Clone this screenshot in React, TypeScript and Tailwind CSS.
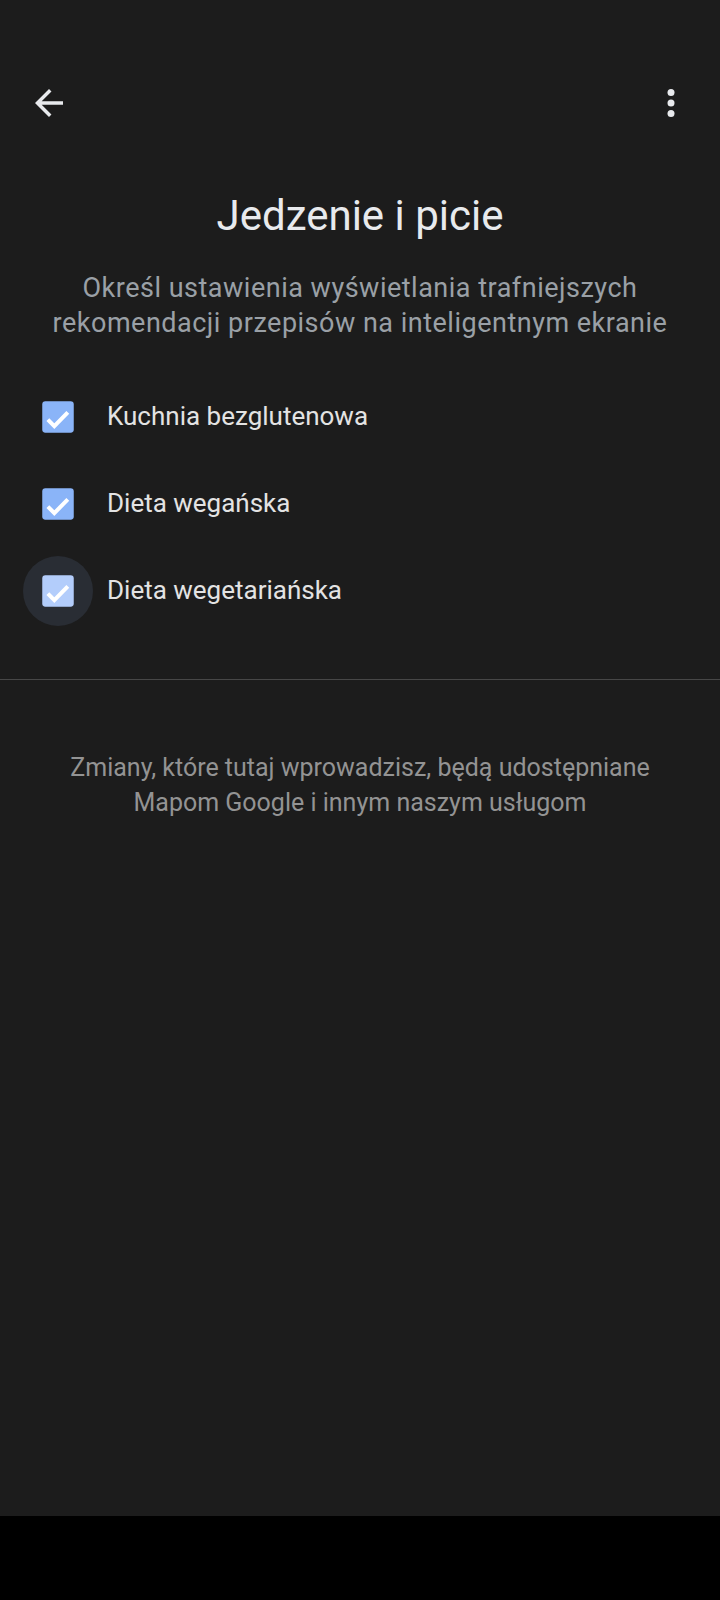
import React from "react";

const OPTIONS = [
  { label: "Kuchnia bezglutenowa", focused: false },
  { label: "Dieta wegańska", focused: false },
  { label: "Dieta wegetariańska", focused: true },
];

const SANS = "font-['Roboto','Liberation_Sans',sans-serif]";

function BackIcon() {
  return (
    <svg width="42" height="42" viewBox="0 0 24 24" fill="#e8eaed" aria-hidden>
      <path d="M20 11H7.83l5.59-5.59L12 4l-8 8 8 8 1.41-1.41L7.83 13H20v-2z" />
    </svg>
  );
}

function MoreIcon() {
  return (
    <svg width="42" height="42" viewBox="0 0 24 24" fill="#e8eaed" aria-hidden>
      <circle cx="12" cy="6" r="2" />
      <circle cx="12" cy="12" r="2" />
      <circle cx="12" cy="18" r="2" />
    </svg>
  );
}

function CheckBox({ focused }: { focused: boolean }) {
  return (
    <div className="relative h-[42px] w-[42px] flex-none">
      {focused && (
        <span className="absolute left-[-14px] top-[-14px] h-[70px] w-[70px] rounded-full bg-[#292d34]" />
      )}
      <svg width="42" height="42" viewBox="0 0 24 24" className="relative" aria-hidden>
        <rect x="3" y="3" width="18" height="18" rx="1.8" fill={focused ? "#b3cdfb" : "#8ab4f8"} />
        <polyline
          points="6.2,13.5 9.9,17.2 17.6,9.4"
          fill="none"
          stroke="#ffffff"
          strokeWidth="2.3"
        />
      </svg>
    </div>
  );
}

export default function App() {
  return (
    <div className={`flex h-[1600px] w-[720px] flex-col bg-[#1c1c1c] ${SANS}`}>
      <div className="flex items-center justify-between px-[28px] pt-[82px]">
        <BackIcon />
        <MoreIcon />
      </div>

      <h1 className="mt-[68px] text-center text-[42px] leading-[48px] font-normal text-[#e8eaed]">
        Jedzenie i picie
      </h1>
      <p className="mt-[31px] px-8 text-center text-[27px] leading-[35px] tracking-[0.5px] text-[#9aa0a6]">
        Określ ustawienia wyświetlania trafniejszych rekomendacji przepisów na inteligentnym ekranie
      </p>

      <ul className="mt-[32px] flex flex-col">
        {OPTIONS.map((o) => (
          <li key={o.label} className="flex h-[87px] items-center gap-[28px] pl-[37px]">
            <CheckBox focused={o.focused} />
            <span className="text-[26px] text-[#e3e3e3]">{o.label}</span>
          </li>
        ))}
      </ul>

      <div className="mt-[45px] h-px bg-[#474747]" />

      <p className="mt-[70px] px-10 text-center text-[25px] leading-[35px] text-[#939393]">
        Zmiany, które tutaj wprowadzisz, będą udostępniane Mapom Google i innym naszym usługom
      </p>

      <div className="flex-1" />
      <div className="h-[84px] bg-black" />
    </div>
  );
}
